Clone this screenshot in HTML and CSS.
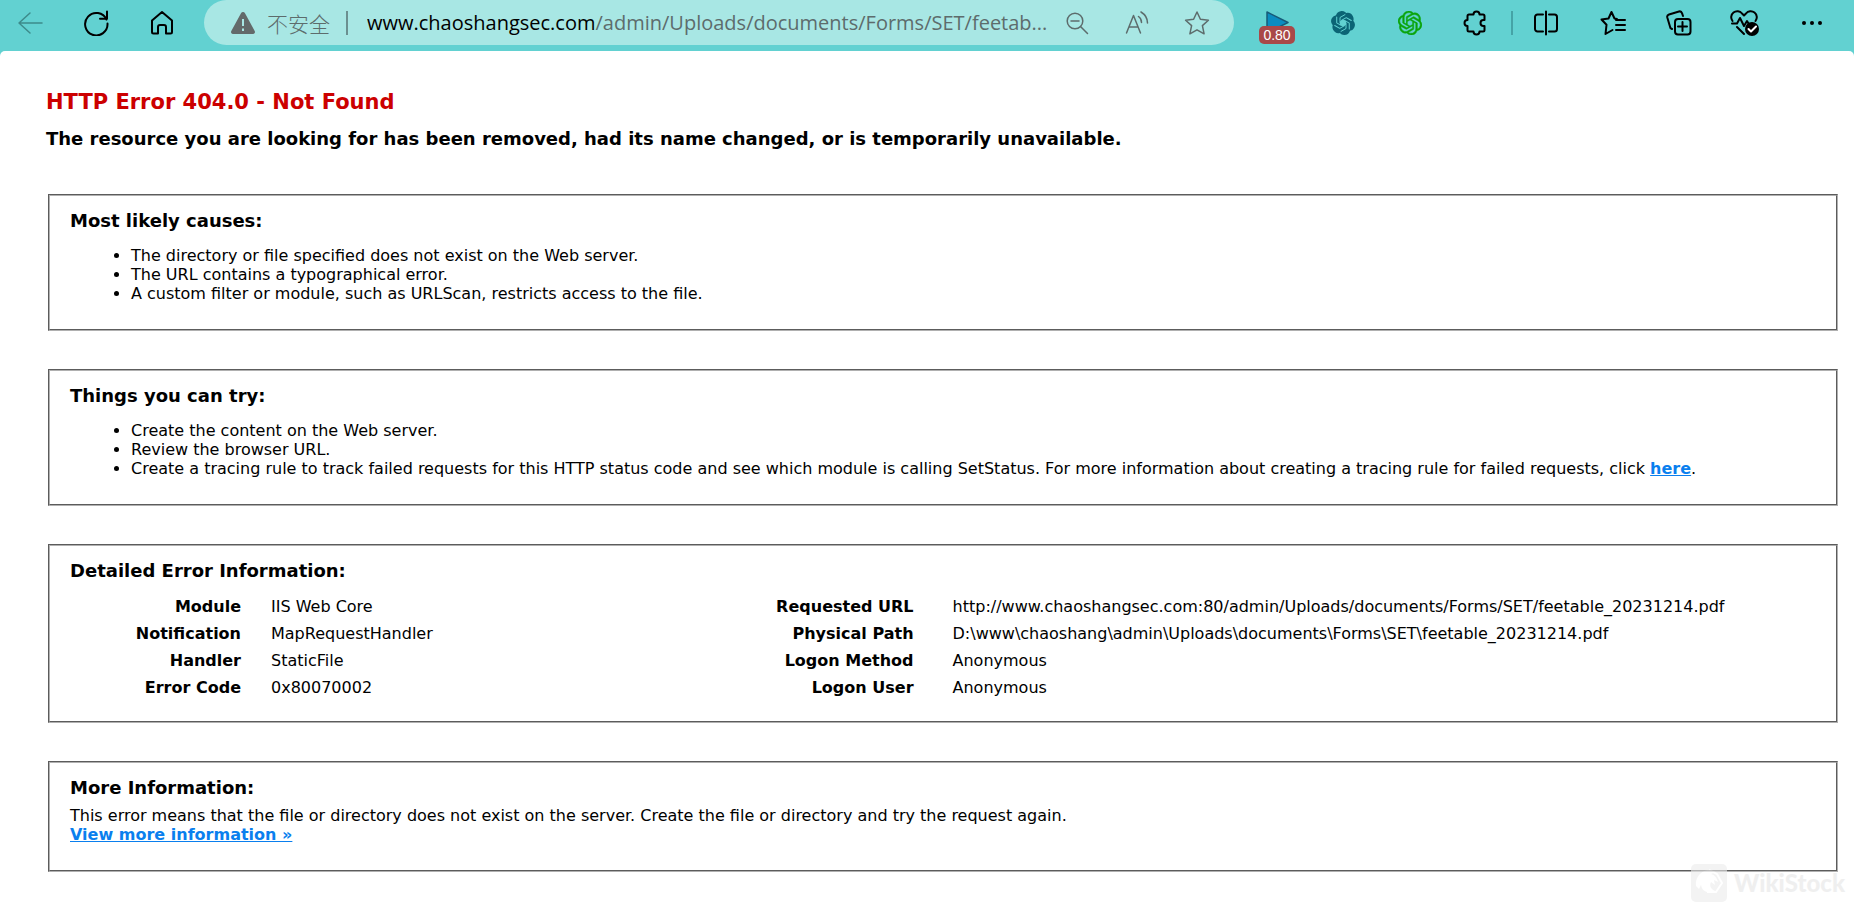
FILE: index.html
```html
<!DOCTYPE html>
<html lang="en">
<head>
    <meta charset="utf-8">
    <title>IIS 10.0 Detailed Error - 404.0 - Not Found</title>
    <link rel="stylesheet" href="styles.css">
</head>
<body>
    <header class="toolbar">
        <nav class="nav-buttons">
            <button class="tool faded" aria-label="Back">
                <svg width="26" height="26" viewBox="0 0 26 26"><path d="M25 13H2M13 3L2 13l11 10"/></svg>
            </button>
            <button class="tool" aria-label="Refresh">
                <svg width="26" height="26" viewBox="0 0 26 26"><path class="thick" d="M23.5 9.500A11.200 11.200 0 1 0 24.500 13.500M24 1.500V8.800H17"/></svg>
            </button>
            <button class="tool" aria-label="Home">
                <svg width="26" height="26" viewBox="0 0 26 26"><path class="thick" d="M3 10.500L13 2l10 8.500V22a1.500 1.500 0 0 1-1.500 1.500H17V17a2 2 0 0 0-2-2h-4a2 2 0 0 0-2 2v6.500H4.500A1.500 1.500 0 0 1 3 22z"/></svg>
            </button>
        </nav>

        <div class="address">
            <button class="security">
                <svg class="warning" width="26" height="24" viewBox="0 0 26 24"><path class="sign" d="M11 2.200a2.300 2.300 0 0 1 4 0L24.700 20a2 2 0 0 1-1.700 3H3a2 2 0 0 1-1.700-3z"/><path class="mark" d="M13 8v7M13 17.500v2.500"/></svg>
                <span>不安全</span>
            </button>
            <div class="url" role="textbox" aria-label="Address"><span class="host">www.chaoshangsec.com</span>/admin/Uploads/documents/Forms/SET/feetab...</div>
            <button class="action" aria-label="Zoom">
                <svg width="24" height="24" viewBox="0 0 24 24"><circle cx="10" cy="10" r="7.800"/><path d="M6 10h8M15.500 15.500L22.500 22.500"/></svg>
            </button>
            <button class="action" aria-label="Read aloud">
                <svg width="24" height="24" viewBox="0 0 24 24"><path d="M1.500 22L8.500 4.500 15.500 22M4 16h9M13.500 5.500q3 2 3 6M16 1q6.500 4 6.500 11"/></svg>
            </button>
            <button class="action" aria-label="Add to favorites">
                <svg width="26" height="26" viewBox="0 0 26 26"><path d="M13 2l3.400 7.300 8 .9-6 5.400 1.700 8.200-7.100-4-7.100 4 1.700-8.200-6-5.400 8-.9z"/></svg>
            </button>
        </div>

        <div class="extensions">
            <button class="tool" aria-label="Playback speed">
                <svg width="26" height="26" viewBox="0 0 26 26"><path class="play" d="M3 2l21 10.500L3 23z"/></svg>
                <span class="badge">0.80</span>
            </button>
            <button class="tool" aria-label="Assistant">
                <svg width="24" height="24" viewBox="0 0 24 24">
                    <path class="knot-dark" d="M22.2819 9.8211a5.9847 5.9847 0 0 0-.5157-4.9108 6.0462 6.0462 0 0 0-6.5098-2.9A6.0651 6.0651 0 0 0 4.9807 4.1818a5.9847 5.9847 0 0 0-3.9977 2.9 6.0462 6.0462 0 0 0 .7427 7.0966 5.98 5.98 0 0 0 .511 4.9107 6.051 6.051 0 0 0 6.5146 2.9001A5.9847 5.9847 0 0 0 13.2599 24a6.0557 6.0557 0 0 0 5.7718-4.2058 5.9894 5.9894 0 0 0 3.9977-2.9001 6.0557 6.0557 0 0 0-.7475-7.0729z"/>
                    <path class="knot-hole" d="M12 8.500l3 1.750v3.500l-3 1.750-3-1.750v-3.500z"/>
                    <g class="knot-gap">
                        <path id="gap" d="M9 12V6.500l5-2.900"/>
                        <use href="#gap" transform="rotate(60 12 12)"/>
                        <use href="#gap" transform="rotate(120 12 12)"/>
                        <use href="#gap" transform="rotate(180 12 12)"/>
                        <use href="#gap" transform="rotate(240 12 12)"/>
                        <use href="#gap" transform="rotate(300 12 12)"/>
                    </g>
                </svg>
            </button>
            <button class="tool" aria-label="ChatGPT">
                <svg width="24" height="24" viewBox="0 0 24 24"><path class="knot-green" d="M22.2819 9.8211a5.9847 5.9847 0 0 0-.5157-4.9108 6.0462 6.0462 0 0 0-6.5098-2.9A6.0651 6.0651 0 0 0 4.9807 4.1818a5.9847 5.9847 0 0 0-3.9977 2.9 6.0462 6.0462 0 0 0 .7427 7.0966 5.98 5.98 0 0 0 .511 4.9107 6.051 6.051 0 0 0 6.5146 2.9001A5.9847 5.9847 0 0 0 13.2599 24a6.0557 6.0557 0 0 0 5.7718-4.2058 5.9894 5.9894 0 0 0 3.9977-2.9001 6.0557 6.0557 0 0 0-.7475-7.0729zm-9.022 12.6081a4.4755 4.4755 0 0 1-2.8764-1.0408l.1419-.0804 4.7783-2.7582a.7948.7948 0 0 0 .3927-.6813v-6.7369l2.02 1.1686a.071.071 0 0 1 .038.052v5.5826a4.504 4.504 0 0 1-4.4945 4.4944zm-9.6607-4.1254a4.4708 4.4708 0 0 1-.5346-3.0137l.142.0852 4.783 2.7582a.7712.7712 0 0 0 .7806 0l5.8428-3.3685v2.3324a.0804.0804 0 0 1-.0332.0615L9.74 19.9502a4.4992 4.4992 0 0 1-6.1408-1.6464zM2.3408 7.8956a4.485 4.485 0 0 1 2.3655-1.9728V11.6a.7664.7664 0 0 0 .3879.6765l5.8144 3.3543-2.0201 1.1685a.0757.0757 0 0 1-.071 0l-4.8303-2.7865A4.504 4.504 0 0 1 2.3408 7.872zm16.5963 3.8558L13.1038 8.364 15.1192 7.2a.0757.0757 0 0 1 .071 0l4.8303 2.7913a4.4944 4.4944 0 0 1-.6765 8.1042v-5.6772a.79.79 0 0 0-.407-.667zm2.0107-3.0231l-.142-.0852-4.7735-2.7818a.7759.7759 0 0 0-.7854 0L9.409 9.2297V6.8974a.0662.0662 0 0 1 .0284-.0615l4.8303-2.7866a4.4992 4.4992 0 0 1 6.6802 4.66zM8.3065 12.863l-2.02-1.1638a.0804.0804 0 0 1-.038-.0567V6.0742a4.4992 4.4992 0 0 1 7.3757-3.4537l-.142.0805L8.704 5.459a.7948.7948 0 0 0-.3927.6813zm1.0976-2.3654l2.602-1.4998 2.6069 1.4998v2.9994l-2.5974 1.4997-2.6067-1.4997Z"/></svg>
            </button>
            <button class="tool" aria-label="Extensions">
                <svg width="26" height="26" viewBox="0 0 26 26"><path class="thick" d="M6 4.500h4.500a3 3 0 0 1 6 0H20a1.500 1.500 0 0 1 1.500 1.500v4h-1a3 3 0 0 0 0 6h1v4a1.500 1.500 0 0 1-1.500 1.500h-3.500a3 3 0 0 1-6 0H6A1.500 1.500 0 0 1 4.500 20v-4a3 3 0 0 1 0-6V6A1.500 1.500 0 0 1 6 4.500z"/></svg>
            </button>
        </div>
        <div class="menu-buttons">
            <button class="tool" aria-label="Split screen">
                <svg width="26" height="26" viewBox="0 0 26 26"><path class="thick" d="M10 4.500H4.500a2.500 2.500 0 0 0-2.500 2.500v12a2.500 2.500 0 0 0 2.500 2.500H10M16 4.500h5.500a2.500 2.500 0 0 1 2.500 2.500v12a2.500 2.500 0 0 1-2.500 2.500H16M13 1.500v23"/></svg>
            </button>
            <button class="tool" aria-label="Favorites">
                <svg width="26" height="26" viewBox="0 0 26 26"><path class="thick" d="M17 9l-2.500-.5L11.500 2 8.500 8.500l-7 1 5 5.300L5.500 24l7-4M16 10h9M16 15h9M16 20h9"/></svg>
            </button>
            <button class="tool" aria-label="Collections">
                <svg width="26" height="26" viewBox="0 0 26 26"><path class="thick" d="M6 19l-1.500-.8L1.300 7.500A2.500 2.500 0 0 1 3 4.500l10-3a2.500 2.500 0 0 1 3 1.700L17 6M16.500 12v9M12 16.500h9"/><rect class="thick" x="9" y="9" width="15.500" height="15.500" rx="3"/></svg>
            </button>
            <button class="tool" aria-label="Browser essentials">
                <svg width="30" height="26" viewBox="0 0 30 26"><path class="thick" d="M2.500 11a6 6 0 0 1 9.500-7.500l2 2 2-2A6 6 0 0 1 25.500 11M2 13.500h5l3-5.500 4 8 3-5 1.500 2.500M7 17l7 7"/><circle class="dot" cx="22" cy="19" r="7"/><path class="tick" d="M18.500 19l2.500 2.500 5-5"/></svg>
            </button>
            <button class="tool" aria-label="Settings and more">
                <svg width="26" height="26" viewBox="0 0 26 26"><g class="dot"><circle cx="5" cy="13" r="2"/><circle cx="13" cy="13" r="2"/><circle cx="21" cy="13" r="2"/></g></svg>
            </button>
        </div>
    </header>

    <main class="content">
        <h1>HTTP Error 404.0 - Not Found</h1>
        <h2>The resource you are looking for has been removed, had its name changed, or is temporarily unavailable.</h2>

        <section class="box">
            <h3>Most likely causes:</h3>
            <ul>
                <li>The directory or file specified does not exist on the Web server.</li>
                <li>The URL contains a typographical error.</li>
                <li>A custom filter or module, such as URLScan, restricts access to the file.</li>
            </ul>
        </section>

        <section class="box">
            <h3>Things you can try:</h3>
            <ul>
                <li>Create the content on the Web server.</li>
                <li>Review the browser URL.</li>
                <li>Create a tracing rule to track failed requests for this HTTP status code and see which module is calling SetStatus. For more information about creating a tracing rule for failed requests, click <a href="#">here</a>.</li>
            </ul>
        </section>

        <section class="box">
            <h3>Detailed Error Information:</h3>
            <div class="details">
                <table class="details-left">
                    <tr><th>Module</th><td>IIS Web Core</td></tr>
                    <tr><th>Notification</th><td>MapRequestHandler</td></tr>
                    <tr><th>Handler</th><td>StaticFile</td></tr>
                    <tr><th>Error Code</th><td>0x80070002</td></tr>
                </table>
                <table class="details-right">
                    <tr><th>Requested URL</th><td>http://www.chaoshangsec.com:80/admin/Uploads/documents/Forms/SET/feetable_20231214.pdf</td></tr>
                    <tr><th>Physical Path</th><td>D:\www\chaoshang\admin\Uploads\documents\Forms\SET\feetable_20231214.pdf</td></tr>
                    <tr><th>Logon Method</th><td>Anonymous</td></tr>
                    <tr><th>Logon User</th><td>Anonymous</td></tr>
                </table>
            </div>
        </section>

        <section class="box">
            <h3>More Information:</h3>
            <p>This error means that the file or directory does not exist on the server. Create the file or directory and try the request again.</p>
            <p><a href="#">View more information »</a></p>
        </section>
    </main>

    <div class="watermark">
        <svg width="36" height="38" viewBox="0 0 36 38"><rect width="36" height="38" rx="5" fill="#ececec"/><path d="M5 22C4 14 9 7 17 6l8 2-5 2c4 1 6 4 7 8l-4-2 1 5-4-3c-2 4 0 7 4 9-8 3-13 0-14-6l-2 4z" fill="#fff"/><path d="M18 6l8 4 5 9-6 9h-9" fill="none" stroke="#fff" stroke-width="2"/></svg>
        <span>WikiStock</span>
    </div>
</body>
</html>
```
FILE: styles.css
```css
* { box-sizing: border-box; }
body { margin: 0; background: #62d1d1; font-family: Verdana, "DejaVu Sans", sans-serif; font-size: 16px; line-height: 19px; color: #000; }
button { margin: 0; padding: 0; border: none; background: none; font: inherit; color: inherit; cursor: pointer; }

/* browser bar */
.toolbar { display: flex; height: 51px; padding-right: 9px; }
.nav-buttons, .extensions, .menu-buttons { display: flex; height: 45px; }
.nav-buttons { width: 207px; margin-left: -3px; padding-right: 9px; }
.tool { position: relative; display: flex; flex: 1; align-items: center; justify-content: center; }
.toolbar svg { display: block; fill: none; stroke: currentColor; stroke-width: 1.5; stroke-linejoin: round; stroke-linecap: round; }
.toolbar .thick { stroke-width: 2; }
.toolbar .dot { fill: #000; stroke: none; }
.toolbar .tick { stroke: #fff; stroke-width: 2; }
.toolbar .play { fill: #0a8cc0; stroke: #175b78; }
.toolbar .knot-dark { fill: #0b6475; stroke: none; }
.toolbar .knot-green { fill: #0aa40a; stroke: #0aa40a; stroke-width: 0.5; }
.toolbar .knot-hole { fill: #62d1d1; stroke: none; }
.toolbar .knot-gap { stroke: #62d1d1; stroke-width: 1; }
.faded { color: #3d8b8b; }
.extensions { position: relative; width: 265px; margin-left: 10px; }
.extensions::after { content: ""; position: absolute; right: -4px; top: 11px; width: 2px; height: 24px; background: #45a3a6; }
.menu-buttons { width: 332px; margin-left: 4px; }
.badge { position: absolute; left: 15px; top: 26px; width: 36px; height: 18px; border-radius: 5px; background: #a94848; color: #fff; font: 14px/18px "Liberation Sans", Arial, sans-serif; }

.address { display: flex; flex: 1; align-items: center; min-width: 0; height: 45px; padding: 0 7px 0 26px; border-radius: 23px; background: #a8e7e4; color: #5d6c6c; }
.security { display: flex; align-items: center; gap: 11px; padding-right: 16px; border-right: 2px solid #6b9090; font: 300 21px/24px "Noto Sans CJK SC", sans-serif; }
.warning .sign { fill: #636a6a; stroke: none; }
.warning .mark { stroke: #a8e7e4; stroke-width: 2; stroke-linecap: butt; }
.url { flex: 1; min-width: 0; margin-left: 19px; overflow: hidden; white-space: nowrap; font: 20px/28px "Open Sans", sans-serif; }
.host { color: #000; }
.action { display: flex; justify-content: center; width: 60px; }

/* error page */
.content { padding: 38px 16px 48px 46px; border-radius: 5px 5px 0 0; background: #fff; }
h1 { margin: 0; font-size: 21px; line-height: 27px; color: #c00; }
h2 { margin: 12px 0 44px; font-size: 18px; line-height: 22px; }
.box { margin: 0 0 38px 2px; padding: 14px 21px 26px 20px; border: 2px groove #b0b0b0; }
.box:last-child { margin-bottom: 0; }
h3 { margin: 0; font-size: 18px; line-height: 22px; }
ul { margin: 14px 0 0; padding: 0 0 0 61px; }
p { margin: 0; }
h3 + p { margin-top: 7px; }
a { color: #0a7fee; font-weight: bold; }
.details { display: flex; justify-content: space-between; margin: 11px 0 -6px; }
table { border-collapse: collapse; table-layout: fixed; }
th, td { padding: 4px 0; vertical-align: top; }
th { text-align: right; }
.details-left { width: 35%; }
.details-left th { width: 28%; }
.details-left td { padding-left: 30px; }
.details-right { width: 63%; }
.details-right th { width: 18%; }
.details-right td { padding-left: 39px; }

.watermark { position: absolute; right: 9px; bottom: 16px; display: flex; align-items: center; gap: 7px; opacity: .6; color: #e6e6e6; font: 900 24px/38px Lato, sans-serif; }
```
